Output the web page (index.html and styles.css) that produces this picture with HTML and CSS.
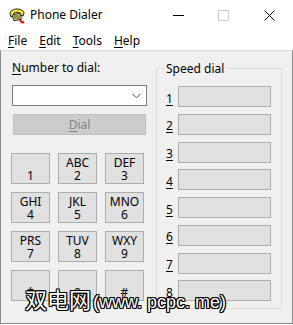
FILE: index.html
```html
<!DOCTYPE html>
<html>
<head>
<meta charset="utf-8">
<link rel="stylesheet" href="styles.css">
</head>
<body>
<div class="window">
  <div class="titlebar">
    <svg class="app-icon" width="18" height="16" viewBox="0 0 18 16">
      <path d="M2 6 C2 3 5 1 9 1 C13 1 16 3 16 5 L15 8 L12 7 L12 5 C10 4 8 4 6 5 L6 8 L3 9 Z" fill="#f2e23a" stroke="#222" stroke-width="1"/>
      <rect x="5" y="6" width="8" height="6" rx="1" fill="#f7ec6a" stroke="#222" stroke-width="1" transform="rotate(-8 9 9)"/>
      <circle cx="7" cy="8" r="0.8" fill="#222"/><circle cx="9" cy="8" r="0.8" fill="#222"/><circle cx="11" cy="8" r="0.8" fill="#222"/>
      <circle cx="7" cy="10" r="0.8" fill="#222"/><circle cx="9" cy="10" r="0.8" fill="#222"/><circle cx="11" cy="10" r="0.8" fill="#222"/>
      <path d="M12 12 C13 14 14 15 16 14" fill="none" stroke="#e01010" stroke-width="2"/>
    </svg>
    <span class="title">Phone Dialer</span>
    <div class="caption-buttons">
      <span class="cap cap-min"><svg width="11" height="11" viewBox="0 0 11 11"><path d="M0 5.5H11" stroke="#000" stroke-width="1"/></svg></span>
      <span class="cap cap-max"><svg width="11" height="11" viewBox="0 0 11 11"><rect x="0.5" y="0.5" width="10" height="10" fill="none" stroke="#cccccc" stroke-width="1"/></svg></span>
      <span class="cap cap-close"><svg width="11" height="11" viewBox="0 0 11 11"><path d="M0.5 0.5L10.5 10.5M10.5 0.5L0.5 10.5" stroke="#000" stroke-width="1"/></svg></span>
    </div>
  </div>
  <div class="menubar">
    <span class="menu"><u>F</u>ile</span>
    <span class="menu"><u>E</u>dit</span>
    <span class="menu"><u>T</u>ools</span>
    <span class="menu"><u>H</u>elp</span>
  </div>
  <div class="client">
    <div class="left">
      <div class="label"><u>N</u>umber to dial:</div>
      <div class="combo">
        <svg class="chev" width="9" height="6" viewBox="0 0 9 6"><path d="M0.5 0.8L4.5 4.8L8.5 0.8" fill="none" stroke="#444" stroke-width="1"/></svg>
      </div>
      <div class="dial"><u>D</u>ial</div>
      <div class="keypad">
        <div class="key"><span>&nbsp;</span><span>1</span></div>
        <div class="key"><span>ABC</span><span>2</span></div>
        <div class="key"><span>DEF</span><span>3</span></div>
        <div class="key"><span>GHI</span><span>4</span></div>
        <div class="key"><span>JKL</span><span>5</span></div>
        <div class="key"><span>MNO</span><span>6</span></div>
        <div class="key"><span>PRS</span><span>7</span></div>
        <div class="key"><span>TUV</span><span>8</span></div>
        <div class="key"><span>WXY</span><span>9</span></div>
        <div class="key"><span>&nbsp;</span><span>*</span></div>
        <div class="key"><span>&nbsp;</span><span>0</span></div>
        <div class="key"><span>&nbsp;</span><span>#</span></div>
      </div>
    </div>
    <fieldset class="group">
      <legend>Speed dial</legend>
      <div class="speed">
        <div class="srow"><span class="snum"><u>1</u></span><span class="sbox"></span></div>
        <div class="srow"><span class="snum"><u>2</u></span><span class="sbox"></span></div>
        <div class="srow"><span class="snum"><u>3</u></span><span class="sbox"></span></div>
        <div class="srow"><span class="snum"><u>4</u></span><span class="sbox"></span></div>
        <div class="srow"><span class="snum"><u>5</u></span><span class="sbox"></span></div>
        <div class="srow"><span class="snum"><u>6</u></span><span class="sbox"></span></div>
        <div class="srow"><span class="snum"><u>7</u></span><span class="sbox"></span></div>
        <div class="srow"><span class="snum"><u>8</u></span><span class="sbox"></span></div>
      </div>
    </fieldset>
  </div>
  <div class="watermark"><span class="wm-cjk">双电网</span><span class="wm-latin">(www. pcpc. me)</span></div>
</div>
</body>
</html>
```
FILE: styles.css
```css
* { box-sizing: border-box; }
html, body { margin: 0; padding: 0; background: #ffffff; overflow: hidden; }
body {
  font-family: "Noto Sans", "Open Sans", sans-serif;
  font-size: 12px;
  color: #000;
}
.window {
  position: relative;
  width: 293px;
  height: 325px;
  background: #fff;
  overflow: hidden;
}
.titlebar {
  height: 31px;
  display: flex;
  align-items: flex-start;
}
.app-icon { margin: 8px 0 0 8px; }
.title {
  margin: 7px 0 0 4px;
  font-size: 12px;
  line-height: 16px;
}
.caption-buttons {
  margin-left: auto;
  display: flex;
  padding-top: 10px;
}
.cap { display: block; height: 11px; }
.cap svg { display: block; }
.cap-min { margin-right: 34px; }
.cap-max { margin-right: 35px; }
.cap-close { margin-right: 18px; }
.menubar {
  height: 19px;
  display: flex;
  gap: 12px;
  padding-left: 8px;
  line-height: 16px;
  padding-top: 2px;
}
.menu u { text-underline-offset: 2px; }
.client {
  height: 274px;
  background: #f0f0f0;
  border-top: 1px solid #dadada;
  border-left: 1px solid #8a8a8a;
  border-right: 1px solid #8a8a8a;
  border-bottom: 1px solid #8a8a8a;
  display: flex;
  align-items: flex-start;
  padding: 9px 0 0 11px;
}
.left { width: 135px; }
.label { line-height: 15px; height: 15px; }
.label u, .dial u, .snum u { text-underline-offset: 2px; }
.combo {
  margin-top: 10px;
  height: 21px;
  background: #fff;
  border: 1px solid #7a7a7a;
  display: flex;
  justify-content: flex-end;
  align-items: center;
  padding-right: 5px;
}
.chev { display: block; }
.dial {
  margin: 8px 1px 0 1px;
  height: 21px;
  background: #cccccc;
  border: 1px solid #bfbfbf;
  color: #838383;
  text-align: center;
  line-height: 19px;
}
.keypad {
  margin: 18px 0 0 -1px;
  display: grid;
  grid-template-columns: repeat(3, 39px);
  grid-auto-rows: 31px;
  column-gap: 8px;
  row-gap: 8px;
}
.key {
  background: #e1e1e1;
  border: 1px solid #adadad;
  display: flex;
  flex-direction: column;
  align-items: center;
  justify-content: center;
  line-height: 13px;
}
.group {
  margin: 1px 0 0 9px;
  padding: 10px 10px 7px 8px;
  width: 126px;
  border: 1px solid #dcdcdc;
  min-width: 0;
}
.group legend {
  padding: 0 2px 0 1px;
  line-height: 15px;
}
.speed {
  display: flex;
  flex-direction: column;
  gap: 6.75px;
}
.srow { display: flex; align-items: center; }
.snum {
  width: 13px;
  padding-left: 1px;
  line-height: 15px;
  padding-top: 3px;
}
.sbox {
  width: 93px;
  height: 21px;
  background: #e1e1e1;
  border: 1px solid #adadad;
}
.watermark {
  position: absolute;
  left: 25px;
  top: 284px;
  line-height: 28px;
  color: #fff;
  white-space: nowrap;
  text-shadow: -1px -1px 0 #000, 1px -1px 0 #000, -1px 1px 0 #000, 1px 1px 0 #000, 0 1px 0 #000, 0 -1px 0 #000, 1px 0 0 #000, -1px 0 0 #000;
}
.wm-cjk {
  font-family: "Noto Sans CJK SC", sans-serif;
  font-size: 22px;
}
.wm-latin {
  font-family: "Liberation Sans", "Noto Sans CJK SC", sans-serif;
  font-size: 18px;
  margin-left: 2px;
}
```
